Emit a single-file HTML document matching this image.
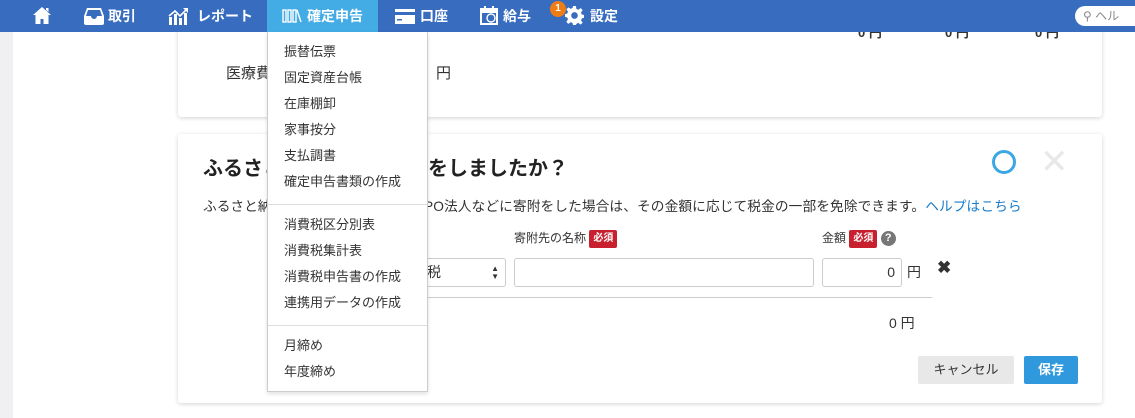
<!DOCTYPE html>
<html><head><meta charset="utf-8"><style>
*{box-sizing:border-box;margin:0;padding:0}
body{width:1135px;height:418px;overflow:hidden;background:#fff;font-family:"Liberation Sans","Noto Sans CJK JP",sans-serif;color:#333;position:relative}
.abs{position:absolute}
.nav{left:0;top:0;width:1135px;height:32px;background:#386cbf;color:#fff;font-size:14px;font-weight:bold}
.ni{position:absolute;top:0;height:32px;line-height:32px;white-space:nowrap}
.ic{position:absolute}
.card{background:#fff;border-radius:3px;box-shadow:0 1px 4px rgba(0,0,0,.18)}
.dd{left:267px;top:32px;width:161px;height:360px;background:#fff;border:1px solid #ccc;border-top:none;box-shadow:0 2px 4px rgba(0,0,0,.12);font-size:13px;color:#333}
.dd div.i{position:absolute;left:16px}
.dd hr{position:absolute;left:0;width:159px;border:none;border-top:1px solid #ddd}
.badge{display:inline-block;background:#c8202f;color:#fff;font-size:10px;font-weight:bold;padding:0 4px;height:18px;line-height:18px;border-radius:2px;vertical-align:middle}
.inp{border:1px solid #ccc;border-radius:3px;background:#fff}
</style></head><body>
<div class="abs" style="left:0;top:32px;width:13px;height:386px;background:#f0f0f3"></div>

<div class="abs card" style="left:178px;top:20px;width:924px;height:97px"></div>
<div class="abs" style="left:858px;top:22px;font-size:13px;font-weight:bold">0 円</div>
<div class="abs" style="left:945px;top:22px;font-size:13px;font-weight:bold">0 円</div>
<div class="abs" style="left:1035px;top:22px;font-size:13px;font-weight:bold">0 円</div>
<div class="abs" style="left:226px;top:62px;font-size:15px">医療費</div>
<div class="abs" style="left:436px;top:62px;font-size:15px">円</div>

<div class="abs card" style="left:178px;top:134px;width:924px;height:269px"></div>
<div class="abs" style="left:203px;top:152px;font-size:20px;font-weight:bold;color:#222">ふるさと</div>
<div class="abs" style="left:428px;top:152px;font-size:20px;font-weight:bold;color:#222">をしましたか？</div>
<div class="abs" style="left:992px;top:150px;width:24px;height:24px;border:3px solid #3da7e5;border-radius:50%"></div>
<div class="abs" style="left:1040px;top:142px;font-size:34px;color:#e8e8e8;line-height:40px">✕</div>
<div class="abs" style="left:203px;top:195px;font-size:13.7px;white-space:nowrap">ふるさと納</div>
<div class="abs" style="left:424px;top:195px;font-size:13.7px;white-space:nowrap;letter-spacing:0.1px">PO法人などに寄附をした場合は、その金額に応じて税金の一部を免除できます。<span style="color:#1a7bc8">ヘルプはこちら</span></div>
<div class="abs" style="left:514px;top:229px;font-size:12px">寄附先の名称 <span class="badge">必須</span></div>
<div class="abs" style="left:822px;top:229px;font-size:12px">金額 <span class="badge">必須</span> <span style="display:inline-block;width:15px;height:15px;border-radius:50%;background:#777;color:#fff;text-align:center;line-height:15px;font-size:11px;font-weight:bold;vertical-align:middle">?</span></div>
<div class="abs inp" style="left:300px;top:258px;width:206px;height:29px;font-size:14px;line-height:27px;padding-left:126px">税<span style="position:absolute;right:6px;top:6px;font-size:8px;line-height:8px">▲<br>▼</span></div>
<div class="abs inp" style="left:514px;top:258px;width:300px;height:29px"></div>
<div class="abs inp" style="left:822px;top:258px;width:80px;height:29px;text-align:right;padding-right:6px;line-height:27px;font-size:14px">0</div>
<div class="abs" style="left:907px;top:262px;font-size:14px">円</div>
<div class="abs" style="left:937px;top:258px;font-size:17px;font-weight:bold;color:#333">✖</div>
<div class="abs" style="left:300px;top:297px;width:632px;height:1px;background:#ccc"></div>
<div class="abs" style="left:889px;top:313px;font-size:14px">0 円</div>
<div class="abs" style="left:918px;top:356px;width:96px;height:28px;background:#e8e8e8;border-radius:2px;text-align:center;line-height:28px;font-size:13px">キャンセル</div>
<div class="abs" style="left:1024px;top:356px;width:54px;height:28px;background:#3098dd;border-radius:2px;text-align:center;line-height:28px;font-size:13px;font-weight:bold;color:#fff">保存</div>

<div class="abs nav">
<svg class="ic" style="left:33px;top:7px" width="18" height="17" viewBox="0 0 18 17"><path d="M9 0L0 8h2.5v9h5v-5h3v5h5V8H18z M13 1h2.5v4L13 3z" fill="#fff"/></svg>
<svg class="ic" style="left:84px;top:7px" width="20" height="18" viewBox="0 0 20 18"><path d="M3 1h14l3 8v7a2 2 0 0 1-2 2H2a2 2 0 0 1-2-2V9z" fill="#fff"/><path d="M4 3h12l2 6h-5a3 3 0 0 1-6 0H2z" fill="#386cbf"/></svg>
<div class="ni" style="left:108px">取引</div>
<svg class="ic" style="left:168px;top:7px" width="21" height="18" viewBox="0 0 21 18"><path d="M1 18V10h3v8zM6 18V7h3v11zM11 18V11h3v7zM16 18V6h3v12z" fill="#fff"/><path d="M1 9l6-5 5 5 7-7" stroke="#fff" stroke-width="1.6" fill="none"/><path d="M15 1h5v5z" fill="#fff"/></svg>
<div class="ni" style="left:197px">レポート</div>
<div class="ni" style="left:267px;width:111px;background:#44ace5"></div>
<svg class="ic" style="left:282px;top:9px" width="20" height="14" viewBox="0 0 20 14"><g stroke="#fff" stroke-width="1.4" fill="none"><rect x="1" y="1" width="3" height="12"/><rect x="6" y="1" width="3" height="12"/><rect x="11" y="1" width="3" height="12"/><path d="M15 1l4 12"/></g></svg>
<div class="ni" style="left:307px">確定申告</div>
<svg class="ic" style="left:395px;top:9px" width="20" height="15" viewBox="0 0 20 15"><rect x="0" y="0" width="20" height="15" fill="#fff"/><rect x="0" y="3" width="20" height="3" fill="#386cbf"/><rect x="2" y="10" width="5" height="1.5" fill="#386cbf"/></svg>
<div class="ni" style="left:420px">口座</div>
<svg class="ic" style="left:480px;top:6px" width="18" height="19" viewBox="0 0 18 19"><rect x="1" y="3" width="16" height="15" fill="none" stroke="#fff" stroke-width="2"/><rect x="1" y="3" width="16" height="4" fill="#fff"/><rect x="4" y="0" width="2" height="4" fill="#fff"/><rect x="12" y="0" width="2" height="4" fill="#fff"/><circle cx="11" cy="12" r="4" fill="none" stroke="#fff" stroke-width="1.4"/></svg>
<div class="ni" style="left:503px">給与</div>
<svg class="ic" style="left:565px;top:6px" width="19" height="19" viewBox="0 0 20 20"><path fill="#fff" fill-rule="evenodd" d="M8.5 0h3l.5 3 2 1 2.5-1.8 2.1 2.1L16.8 7l1 2 2.2.5v3l-2.2.5-1 2 1.8 2.5-2.1 2.1L14 17.8l-2 1-.5 1.2h-3L8 18l-2-1-2.5 1.8-2.1-2.1L3.2 14l-1-2L0 11.5v-3L2.2 8l1-2L1.4 3.5l2.1-2.1L6 3l2-1zM10 6.5a3.5 3.5 0 1 0 0 7 3.5 3.5 0 0 0 0-7z"/></svg>
<div class="ni" style="left:590px">設定</div>
<div class="abs" style="left:550px;top:1px;width:16px;height:16px;border-radius:50%;background:#f07c15;color:#fff;font-size:10px;text-align:center;line-height:16px">1</div>
<div class="abs" style="left:1075px;top:6px;width:70px;height:20px;background:#fff;border-radius:10px;color:#888;font-weight:normal;font-size:12px;line-height:20px;padding-left:8px">⚲ ヘル</div>
</div>

<div class="abs dd">
<div class="i" style="top:9px">振替伝票</div>
<div class="i" style="top:35px">固定資産台帳</div>
<div class="i" style="top:61px">在庫棚卸</div>
<div class="i" style="top:87px">家事按分</div>
<div class="i" style="top:113px">支払調書</div>
<div class="i" style="top:139px">確定申告書類の作成</div>
<hr style="top:172px">
<div class="i" style="top:182px">消費税区分別表</div>
<div class="i" style="top:208px">消費税集計表</div>
<div class="i" style="top:234px">消費税申告書の作成</div>
<div class="i" style="top:260px">連携用データの作成</div>
<hr style="top:293px">
<div class="i" style="top:303px">月締め</div>
<div class="i" style="top:329px">年度締め</div>
</div>
</body></html>
